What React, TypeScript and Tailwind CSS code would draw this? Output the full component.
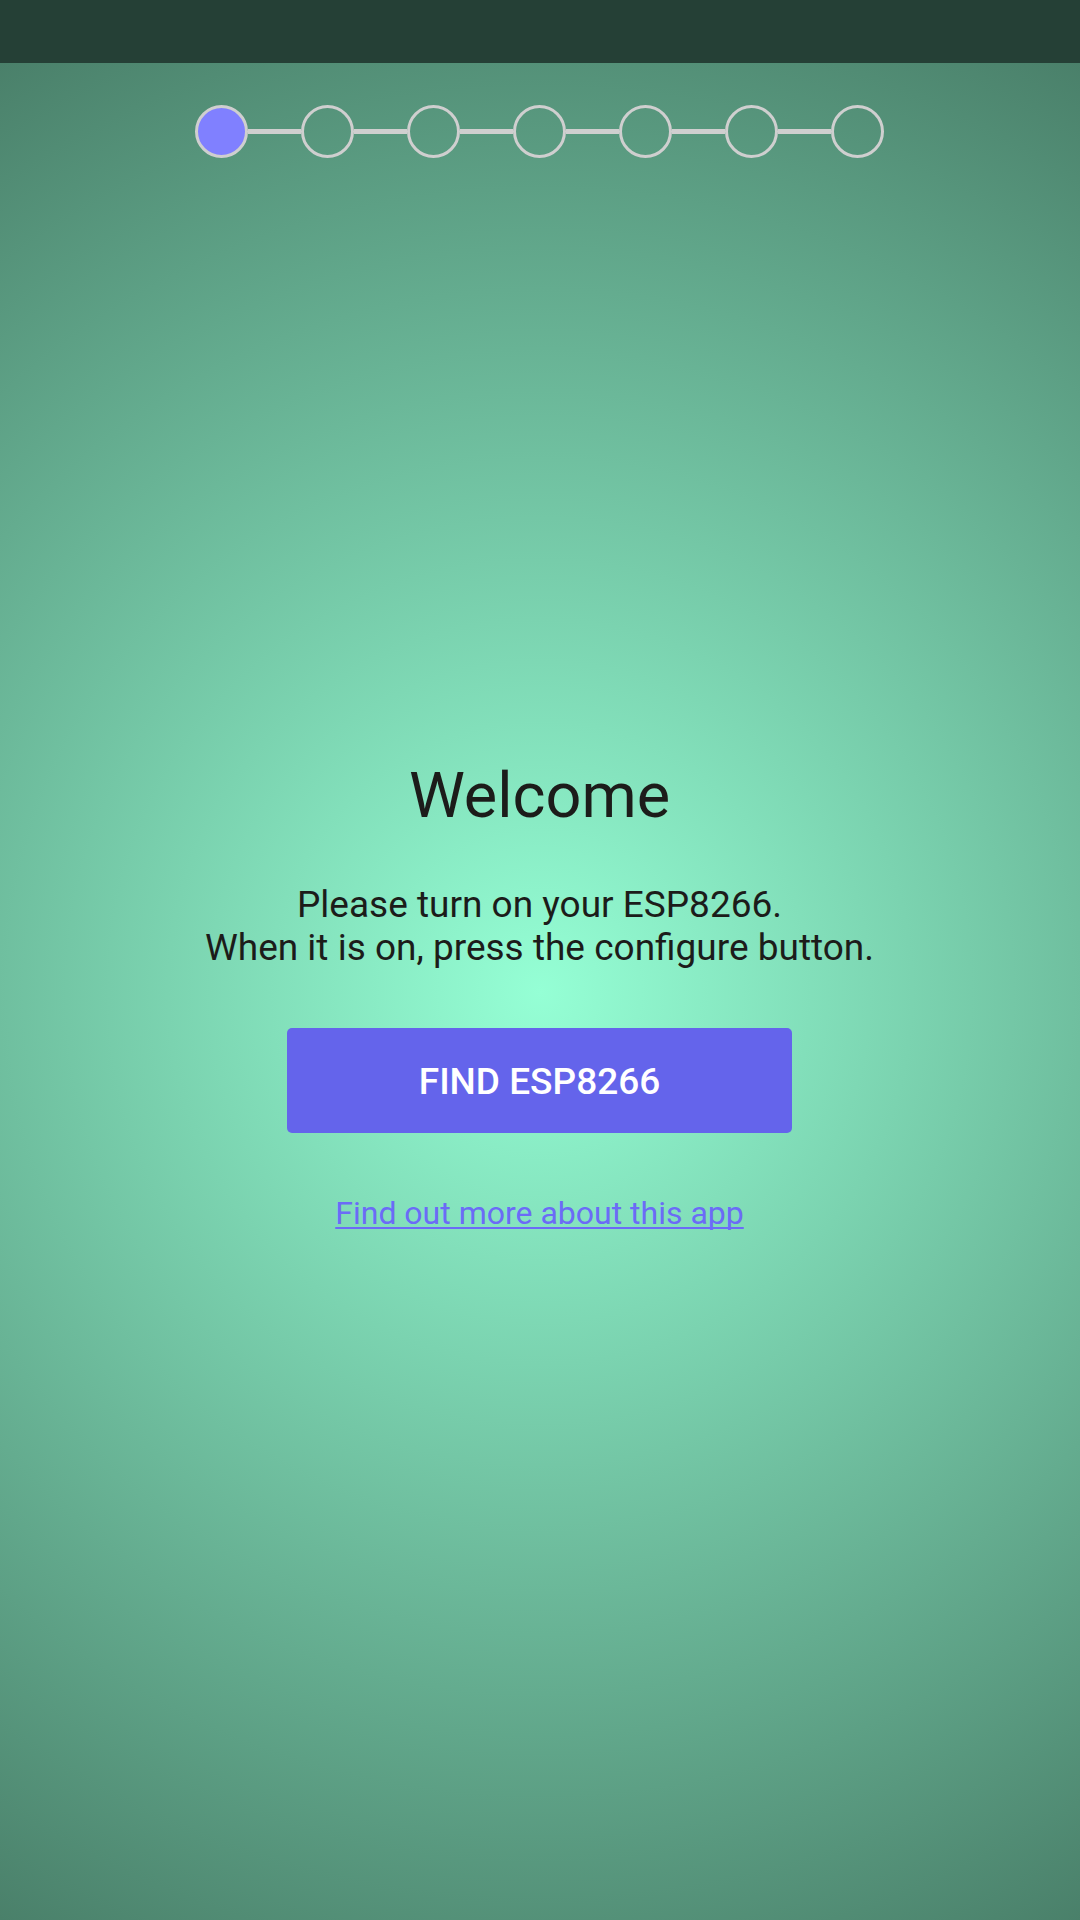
const STEPS = 7;

function Stepper({ current }: { current: number }) {
  return (
    <ol aria-label="Setup progress" className="flex items-center justify-center">
      {Array.from({ length: STEPS }, (_, i) => (
        <li
          key={i}
          aria-label={`Step ${i + 1}`}
          aria-current={i === current ? "step" : undefined}
          className="flex items-center"
        >
          {i > 0 && <span className="h-[5px] w-[53px] bg-[#cfcfcf]" />}
          <span
            className={
              i === current
                ? "size-[53px] rounded-full border-3 border-[#cfcfcf] bg-[#8080ff]"
                : "size-[53px] rounded-full border-3 border-[#cfcfcf]"
            }
          />
        </li>
      ))}
    </ol>
  );
}

export default function App() {
  return (
    <div className="flex min-h-screen flex-col font-['Roboto',sans-serif] text-[#1c1c1a]">
      <header className="h-[63px] bg-[#254036]" />
      <main className="flex grow flex-col bg-[radial-gradient(circle_farthest-corner_at_center,#95ffd5,#4a806a)] pt-[42px] pr-px">
        <Stepper current={0} />
        <section className="flex grow flex-col items-center justify-center pb-[88px] text-center">
          <h1 className="text-[63px] leading-[74px]">Welcome</h1>
          <p className="mt-[50px] text-[37px] leading-[43px]">
            Please turn on your ESP8266.
            <br />
            When it is on, press the configure button.
          </p>
          <button
            type="button"
            className="mt-[59px] h-[105px] w-[505px] rounded-[5px] bg-[#6464eb] pt-1 text-[37px] font-medium text-white"
          >
            FIND ESP8266
          </button>
          <a
            href="#about"
            className="mt-[61px] text-[32px] leading-[38px] text-[#6b6bf7] underline decoration-2 underline-offset-3 [text-decoration-skip-ink:none]"
          >
            Find out more about this app
          </a>
        </section>
      </main>
    </div>
  );
}
